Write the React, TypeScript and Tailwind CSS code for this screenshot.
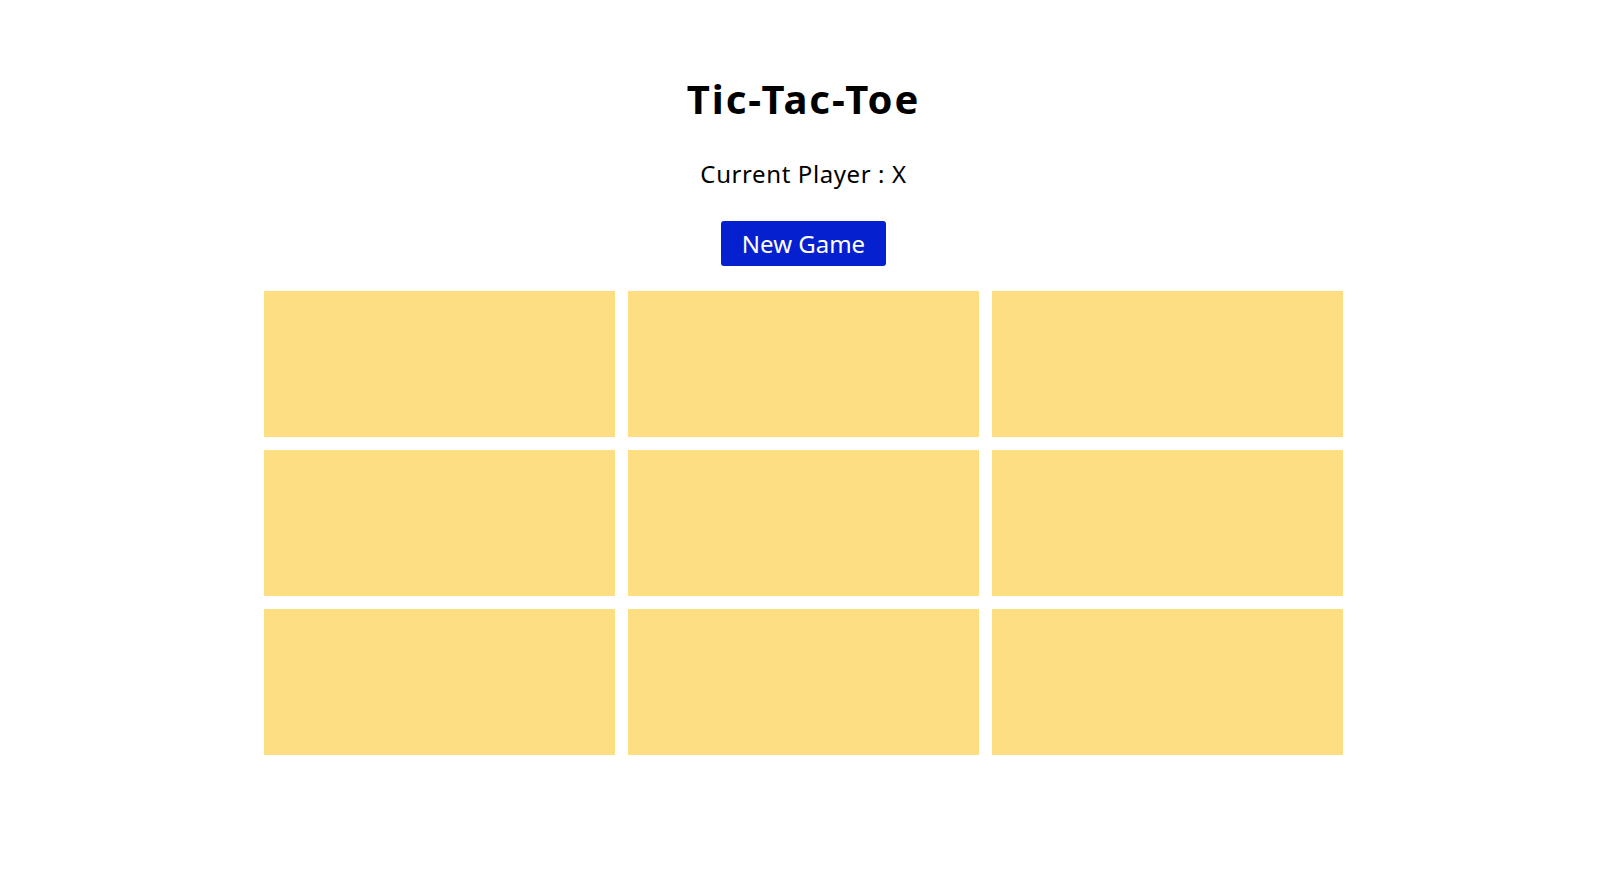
const cells = Array.from({ length: 9 }, (_, i) => i);

export default function App() {
  return (
    <div
      className="w-[1607px] min-h-[891px] bg-white flex flex-col items-center pt-[75px] text-black"
      style={{ fontFamily: '"Comic Sans MS", "Noto Sans", sans-serif' }}
    >
      <h1 className="text-[40px] leading-[48px] font-bold tracking-[2px]">Tic-Tac-Toe</h1>
      <p className="mt-[37px] text-[24px] leading-[28px] tracking-[0.6px]">Current Player : X</p>
      <button className="mt-[33px] w-[165px] h-[45px] bg-[#0520cf] text-white text-[24px] leading-[28px] rounded-[3px]">
        New Game
      </button>
      <div className="mt-[25px] grid grid-cols-[repeat(3,351px)] auto-rows-[146px] gap-[13px]">
        {cells.map((i) => (
          <div key={i} className="bg-[#fede82]" />
        ))}
      </div>
    </div>
  );
}
